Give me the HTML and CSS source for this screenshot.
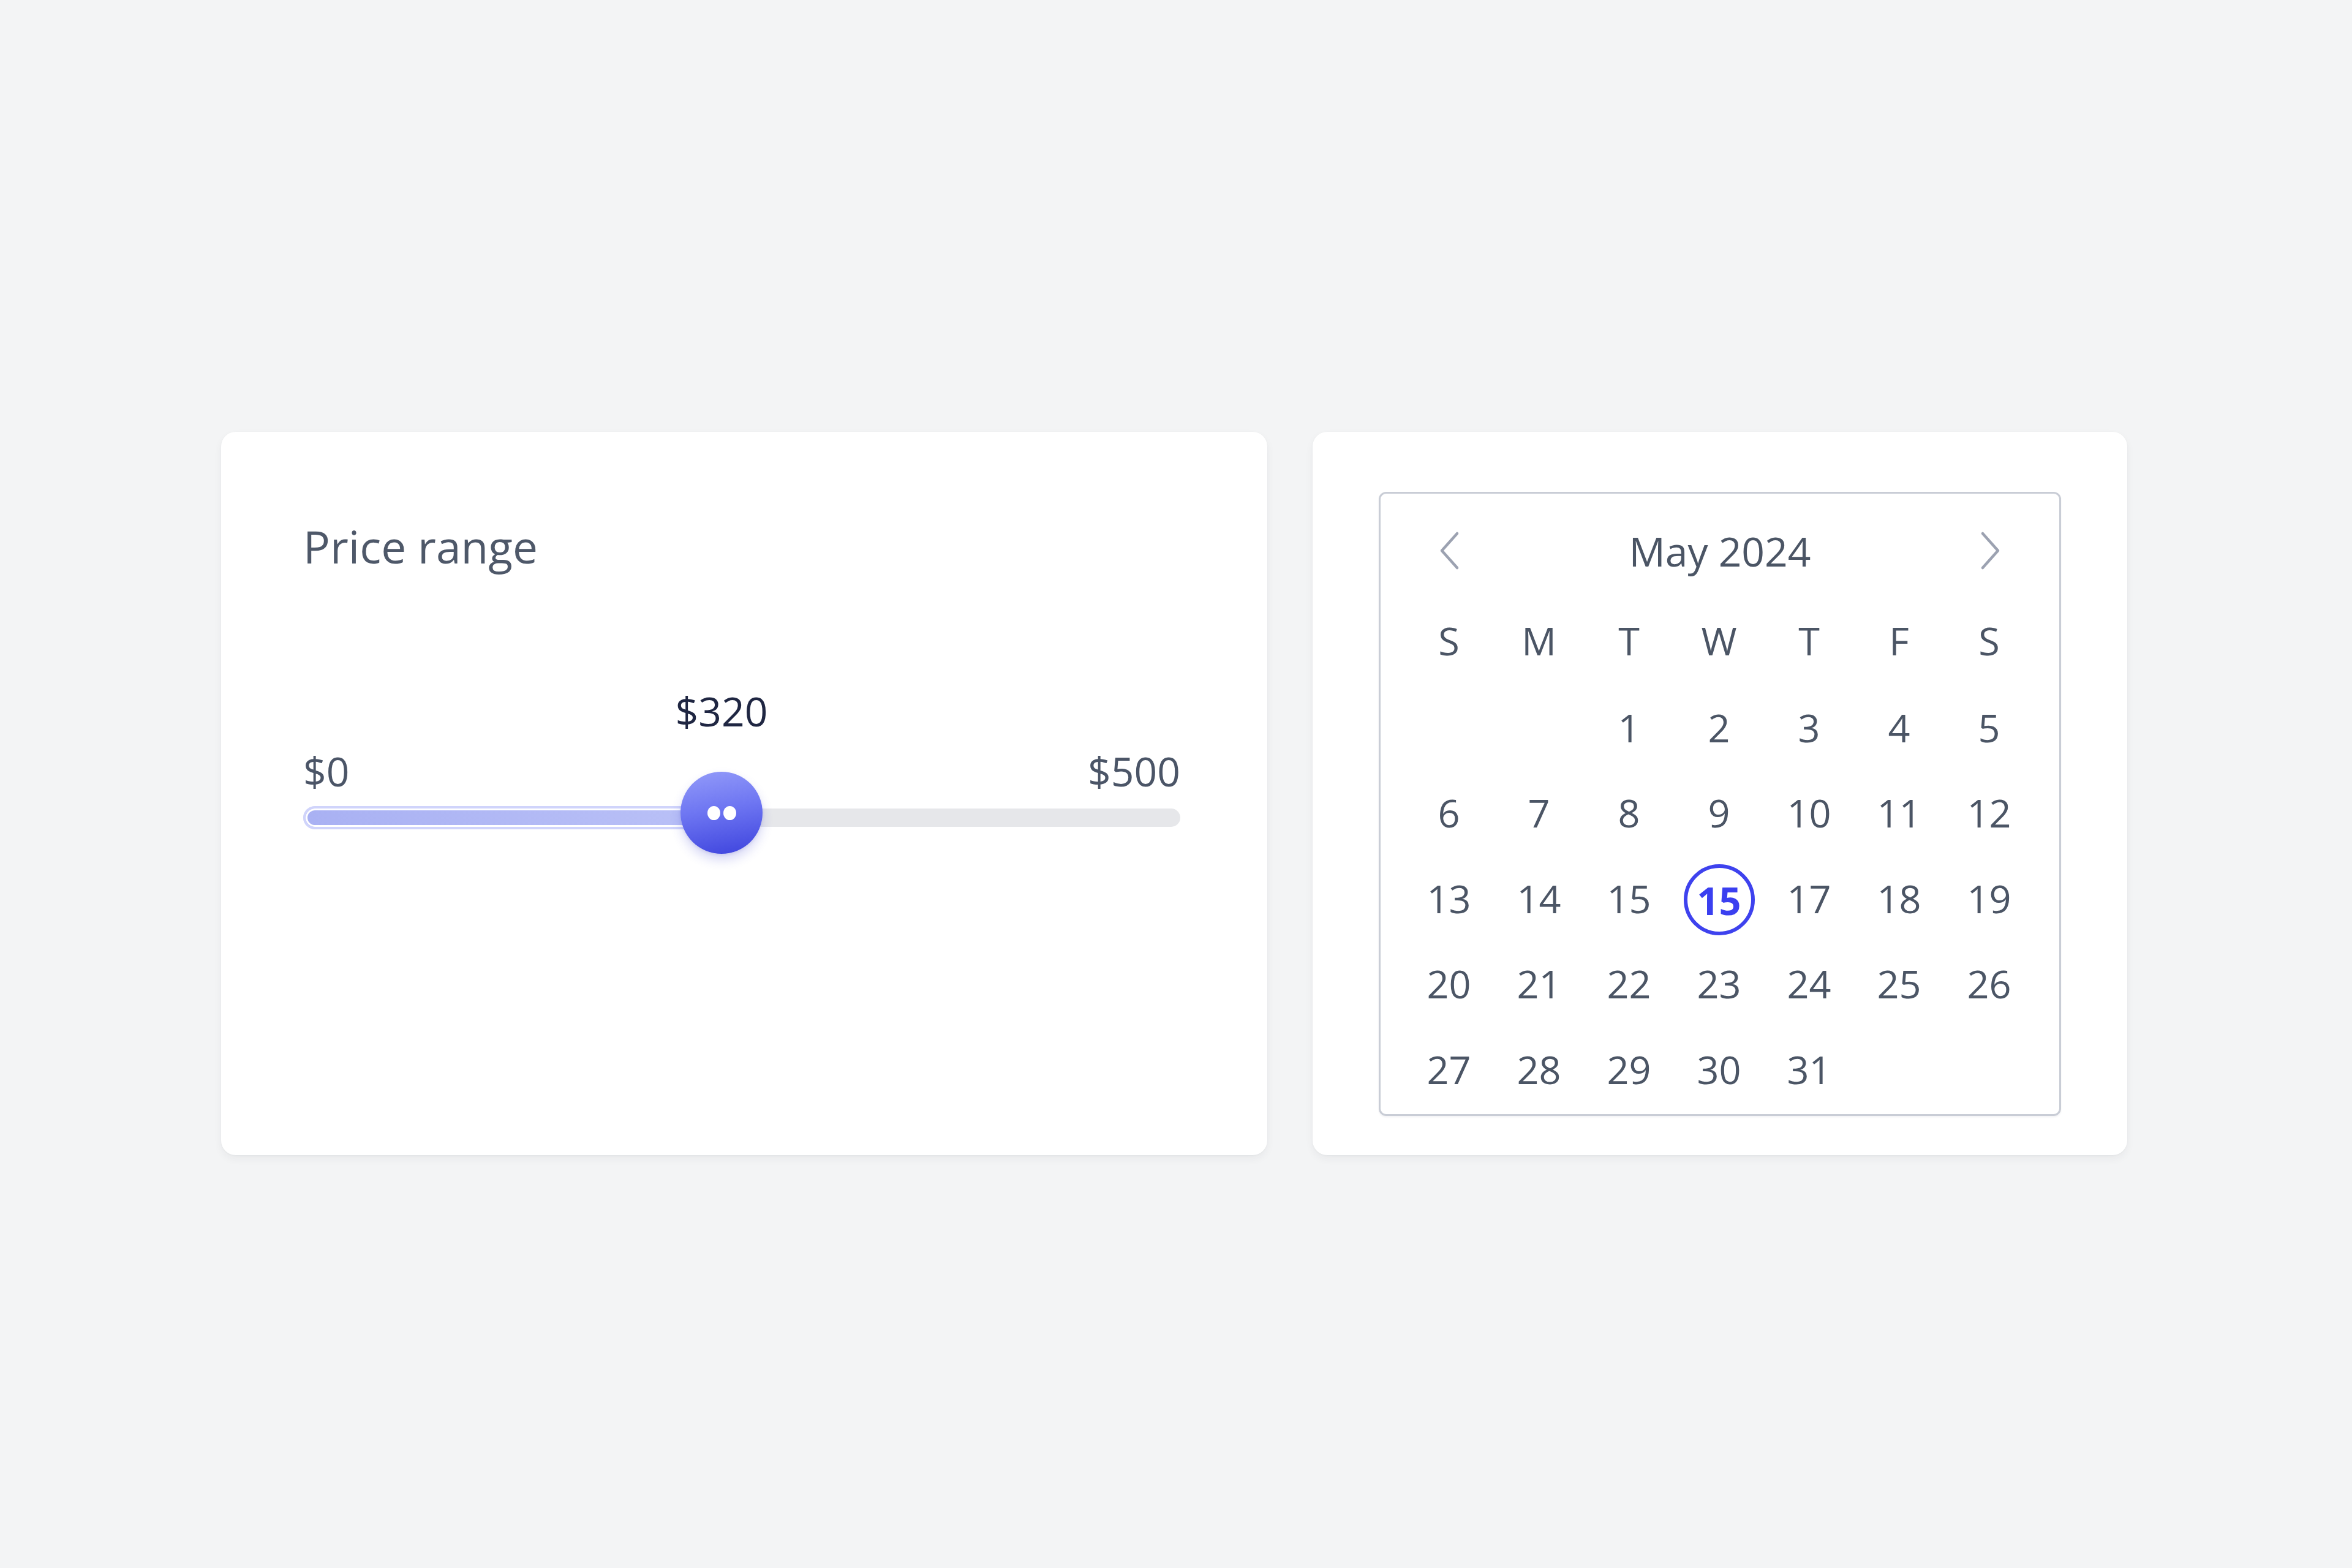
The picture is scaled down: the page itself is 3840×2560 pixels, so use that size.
FILE: index.html
```html
<!DOCTYPE html>
<html lang="en">
<head>
<meta charset="utf-8">
<title>Price range and calendar</title>
<link rel="stylesheet" href="styles.css">
</head>
<body>
<main class="stage">
  <section class="card price-card">
    <h2 class="title">Price range</h2>
    <div class="slider" style="--pos:47.7%">
      <div class="value">$320</div>
      <div class="bounds"><span>$0</span><span>$500</span></div>
      <div class="track">
        <div class="fill"></div>
        <div class="thumb"><i></i><i></i></div>
      </div>
    </div>
  </section>
  <section class="card cal-card">
    <div class="calendar">
      <div class="cal-head">
        <span class="nav"><svg width="36" height="64" viewBox="0 0 36 64"><path d="M31 4 L6 32 L31 60" fill="none" stroke="#9ca2b1" stroke-width="4.5" stroke-linecap="round" stroke-linejoin="round"/></svg></span>
        <span class="month">May 2024</span>
        <span class="nav"><svg width="36" height="64" viewBox="0 0 36 64"><path d="M5 4 L30 32 L5 60" fill="none" stroke="#9ca2b1" stroke-width="4.5" stroke-linecap="round" stroke-linejoin="round"/></svg></span>
      </div>
      <div class="grid weekdays">
        <span>S</span><span>M</span><span>T</span><span>W</span><span>T</span><span>F</span><span>S</span>
      </div>
      <div class="grid days">
        <span></span><span></span><span>1</span><span>2</span><span>3</span><span>4</span><span>5</span>
        <span>6</span><span>7</span><span>8</span><span>9</span><span>10</span><span>11</span><span>12</span>
        <span>13</span><span>14</span><span>15</span><span><b class="sel">15</b></span><span>17</span><span>18</span><span>19</span>
        <span>20</span><span>21</span><span>22</span><span>23</span><span>24</span><span>25</span><span>26</span>
        <span>27</span><span>28</span><span>29</span><span>30</span><span>31</span><span></span><span></span>
      </div>
    </div>
  </section>
</main>
</body>
</html>
```

FILE: styles.css
```css
* { box-sizing: border-box; }
html, body { margin: 0; padding: 0; }
body {
  background: #f3f4f5;
  font-family: "Open Sans", "Noto Sans", "Liberation Sans", sans-serif;
  color: #4b5565;
  width: 3840px;
  height: 2560px;
  overflow: hidden;
}
.stage {
  display: flex;
  justify-content: flex-start;
  align-items: stretch;
  gap: 74px;
  padding: 705px 0 0 361px;
}
.card {
  background: #ffffff;
  border-radius: 24px;
  box-shadow: 0 6px 14px rgba(30, 40, 60, 0.05), 0 1px 3px rgba(30, 40, 60, 0.04);
}
.price-card {
  width: 1708px;
  padding: 150px 144px 0 134px;
}
.title {
  margin: 0;
  font-size: 73px;
  line-height: 1;
  font-weight: 400;
  color: #4e5869;
}
.slider {
  margin-top: 199px;
  width: 1432px;
}
.value {
  width: max-content;
  margin-left: var(--pos);
  transform: translateX(-50%);
  font-size: 66px;
  line-height: 1;
  color: #1f2642;
}
.bounds {
  display: flex;
  justify-content: space-between;
  margin-top: 32px;
  font-size: 66px;
  line-height: 1;
  color: #4b5567;
}
.track {
  position: relative;
  margin-top: 29px;
  height: 30px;
  border-radius: 15px;
  background: #e6e7ea;
  display: flex;
  align-items: center;
}
.fill {
  width: var(--pos);
  height: 38px;
  flex: none;
  border-radius: 19px;
  background: linear-gradient(90deg, #a9b1f3, #bac1f7);
  border: 4px solid #d0d4fb;
  box-shadow: inset 0 0 0 3px #ffffff;
}
.thumb {
  position: absolute;
  top: -60px;
  left: var(--pos);
  width: 134px;
  height: 134px;
  margin-left: -67px;
  border-radius: 50%;
  background: linear-gradient(170deg, #939bf9 0%, #6e76f2 45%, #3d43dd 100%);
  box-shadow: 0 10px 18px rgba(55, 62, 210, 0.2), 0 2px 4px rgba(40, 40, 120, 0.1);
  display: flex;
  align-items: center;
  justify-content: center;
  gap: 5px;
}
.thumb i {
  display: block;
  width: 21px;
  height: 23px;
  border-radius: 50%;
  background: #ffffff;
}
.cal-card {
  width: 1330px;
  padding: 98px 108px 64px 108px;
}
.calendar {
  border: 3px solid #c9cdd6;
  border-radius: 12px;
  padding: 60px 38px 4px;
  box-shadow: 0 2px 3px rgba(30, 40, 60, 0.06);
}
.cal-head {
  display: flex;
  justify-content: space-between;
  align-items: center;
  height: 66px;
}
.nav {
  width: 147px;
  display: flex;
  justify-content: center;
  align-items: center;
}
.nav svg { display: block; }
.month {
  font-size: 66px;
  line-height: 1;
  color: #4b5565;
}
.grid {
  display: grid;
  grid-template-columns: repeat(7, 147px);
  font-size: 63px;
  color: #4b5565;
}
.grid span {
  height: 139.5px;
  display: flex;
  align-items: center;
  justify-content: center;
  line-height: 1;
}
.weekdays { margin-top: 44px; }
.days { margin-top: 2px; }
.sel {
  display: flex;
  align-items: center;
  justify-content: center;
  width: 116px;
  height: 116px;
  border: 6px solid #3e42ee;
  border-radius: 50%;
  color: #3a3ff0;
  font-weight: 700;
  margin-top: 6px;
}
```
